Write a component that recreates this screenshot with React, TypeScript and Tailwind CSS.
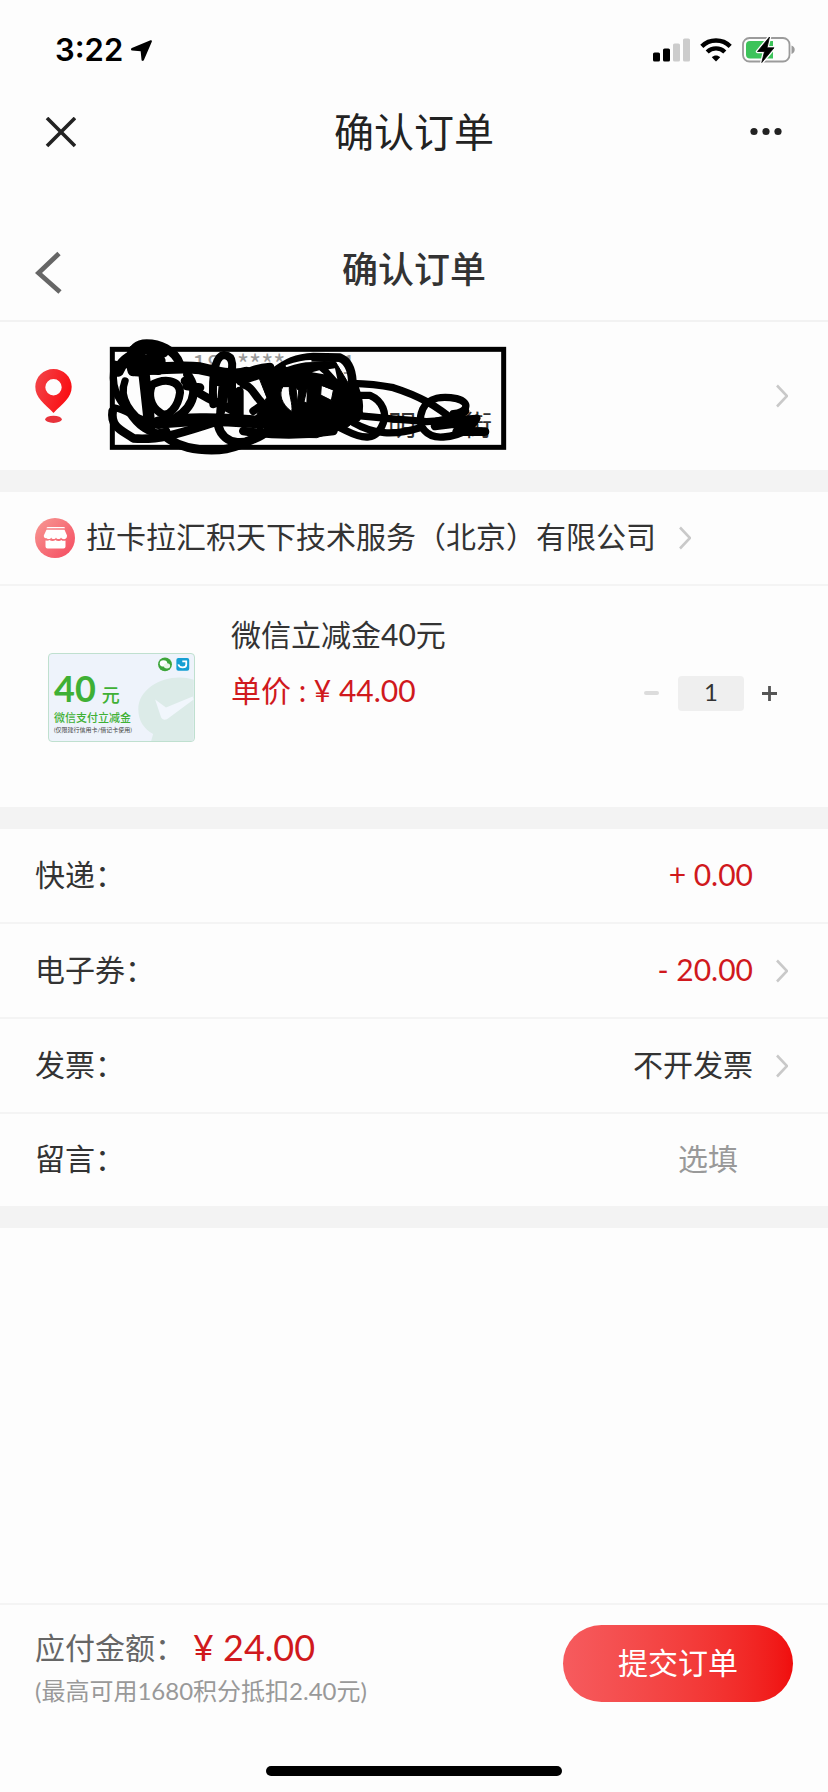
import React, { useState } from 'react';

const ChevronRight = () => (
  <svg className="w-3 h-6 shrink-0" viewBox="0 0 12 24" fill="none" stroke="#c9c9c9" strokeWidth="2.600" aria-hidden="true">
    <path d="M1 1.500L11 12L1 22.500" />
  </svg>
);

const StatusBar = () => (
  <div className="h-22 pt-3 pl-[55px] pr-8 flex items-center justify-between text-black">
    <div className="flex items-center gap-2">
      <span className="font-['Inter',sans-serif] font-semibold text-[31px] leading-9">3:22</span>
      <svg className="w-[21px] h-[21px]" viewBox="0 0 20 20" aria-hidden="true">
        <path d="M18.600 0.300L0.800 7.600C-0.400 8.200 -0.200 9.800 1 10L9.200 10.800L10 18.800C10.200 20.200 11.700 20.300 12.300 19L19.800 1.600C20.200 0.600 19.600 -0.100 18.600 0.300Z" />
      </svg>
    </div>
    <div className="flex items-center gap-2.5">
      <svg className="w-[37px] h-6" viewBox="0 0 37 24" aria-hidden="true">
        <rect x="0" y="14.5" width="7" height="9" rx="1.6" />
        <rect x="10" y="10.5" width="7" height="13" rx="1.6" />
        <rect x="20" y="5.5" width="7" height="18" rx="1.6" fill="#cccccc" />
        <rect x="30" y="0.5" width="7" height="23" rx="1.6" fill="#cccccc" />
      </svg>
      <svg className="w-8 h-6" viewBox="0 0 32 24" fill="none" stroke="#000" strokeWidth="4.4" aria-hidden="true">
        <path d="M1.8 8.4C9.6 0.6 22.4 0.6 30.2 8.4" />
        <path d="M7.2 14C12.2 9.2 19.8 9.2 24.8 14" />
        <path d="M11.8 19.2C14.2 16.8 17.8 16.8 20.2 19.2L16 23.6Z" fill="#000" stroke="none" />
      </svg>
      <svg className="w-[54px] h-7" viewBox="0 0 54 28" aria-hidden="true">
        <rect x="1" y="2" width="46.5" height="23.5" rx="6.5" fill="none" stroke="#9b9b9b" strokeWidth="1.8" />
        <path d="M8 5H31V22.500H8A4 4 0 0 1 4 18.500V9A4 4 0 0 1 8 5Z" fill="#3dc35a" />
        <path d="M49.500 9.600C53.800 10.800 53.800 16.800 49.500 18Z" fill="#9b9b9b" />
        <path d="M27.500 1L15.500 15.500H22.500L19.800 26.500L32 11.800H25Z" stroke="#fdfdfd" strokeWidth="3.400" strokeLinejoin="round" />
        <path d="M27.500 1L15.500 15.500H22.500L19.800 26.500L32 11.800H25Z" stroke="#000" strokeWidth="0.800" strokeLinejoin="round" />
      </svg>
    </div>
  </div>
);

const PinIcon = () => (
  <svg className="w-[37px] h-14 shrink-0" viewBox="0 0 37 56" aria-hidden="true">
    <defs>
      <linearGradient id="pin" x1="0" y1="0" x2="1" y2="0.4">
        <stop offset="0" stopColor="#f2474b" />
        <stop offset="1" stopColor="#fa0f14" />
      </linearGradient>
    </defs>
    <path
      d="M18.500 1C8.500 1 0.300 9 0.300 18.800C0.300 30 9.500 35.500 18.500 45C27.500 35.500 36.700 30 36.700 18.800C36.700 9 28.500 1 18.500 1ZM18.500 11A8.200 8.200 0 1 1 18.500 27.400A8.200 8.200 0 1 1 18.500 11Z"
      fill="url(#pin)"
      fillRule="evenodd"
    />
    <ellipse cx="18.500" cy="51.300" rx="8.300" ry="3.600" fill="#e8333b" />
  </svg>
);

const Scribble = () => (
  <svg
    className="absolute left-0 top-0 w-[420px] h-[130px]"
    viewBox="0 0 1260 390"
    fill="none"
    stroke="#000"
    strokeWidth="26"
    strokeLinecap="round"
    strokeLinejoin="round"
    aria-hidden="true"
  >
    <rect x="37" y="55" width="1174" height="294" strokeWidth="15" strokeLinecap="butt" strokeLinejoin="miter" />
    <path d="M90 85C95 55 110 38 140 38C175 38 225 55 240 100" />
    <path d="M55 120C65 90 90 75 120 65M100 60C85 110 95 135 150 110M130 50L190 62M120 85L180 90M110 110L175 115" strokeWidth="34" />
    <path d="M45 100C30 160 50 200 85 240C110 280 150 320 200 300" strokeWidth="22" />
    <path d="M75 150C55 200 90 250 150 290" strokeWidth="22" />
    <path d="M130 110L138 180L150 290" strokeWidth="34" />
    <path d="M100 118C180 112 240 105 300 112C340 120 400 140 440 125" strokeWidth="36" />
    <path d="M150 165C190 140 240 145 240 185C235 225 205 265 180 245C150 225 145 190 155 165" strokeWidth="24" />
    <path d="M262 130C300 180 280 240 200 275M255 150C300 200 350 210 400 240M260 165L300 170" />
    <path d="M38 240C30 290 70 300 100 322C180 330 260 300 340 275" />
    <path d="M45 230C90 240 110 270 170 275" strokeWidth="20" />
    <path d="M175 275C260 265 330 262 460 272L640 275" strokeWidth="38" />
    <path d="M190 310C240 360 350 370 420 342C470 320 500 310 510 290" />
    <path d="M340 220C335 130 345 75 372 72C405 75 400 110 385 160C365 200 370 230 355 265" strokeWidth="24" />
    <path d="M355 285C370 345 450 350 480 300M430 300C500 310 600 315 700 300" />
    <path d="M345 150C400 170 420 115 510 108M370 150L362 240M395 140L395 230M418 180L418 270M420 150L480 130" />
    <path d="M430 160C460 170 460 190 490 220L460 240" strokeWidth="24" />
    <path
      d="M470 120L600 95L705 90L765 190L790 250L740 290L650 320L530 318L460 270L500 200ZM548 168C535 190 545 220 575 242C580 220 565 190 568 168ZM664 164L662 192L694 208L700 178ZM588 170L592 215L596 180ZM622 170L612 212L620 216Z"
      fill="#000"
      stroke="#000"
      strokeWidth="3"
      fillRule="evenodd"
    />
    <path d="M520 125C560 95 590 80 640 78L720 80C745 90 755 115 757 150C770 190 785 220 770 260" />
    <path d="M560 105C590 95 610 90 632 90" stroke="#fdfdfd" strokeWidth="6" />
    <path d="M685 115L705 112L712 145ZM636 124L658 118L672 130Z" fill="#fdfdfd" stroke="none" />
    <path d="M755 157C800 158 840 162 880 170C960 195 1010 225 1070 275" strokeWidth="22" />
    <path d="M775 193L810 193C850 210 860 250 850 275C830 330 790 325 740 300L720 290" strokeWidth="22" />
    <path d="M745 250C840 262 900 265 980 272L1130 262" strokeWidth="22" />
    <path d="M760 275C820 310 880 315 960 290" strokeWidth="22" />
    <path d="M1060 248C1100 245 1115 215 1070 203C1030 195 985 198 968 235C945 290 985 322 1030 318C1090 315 1120 285 1130 262" strokeWidth="22" />
    <path d="M1010 272L1060 262L1095 240M1005 285L1060 278L1110 285M1070 302L1155 302" strokeWidth="26" />
  </svg>
);

const StoreIcon = () => (
  <svg className="w-10 h-10 shrink-0" viewBox="0 0 40 40" aria-hidden="true">
    <defs>
      <linearGradient id="store" x1="0" y1="0" x2="1" y2="1">
        <stop offset="0" stopColor="#f79a94" />
        <stop offset="1" stopColor="#f5495f" />
      </linearGradient>
    </defs>
    <circle cx="20" cy="20" r="20" fill="url(#store)" />
    <path d="M13 9H28.500Q30 9 30 10.200H11.500Q11.500 9 13 9Z" fill="#fff" />
    <path
      d="M11.500 11.800H29.500L32 17.500C32.200 20 30.500 21.200 29 21.200C27.500 21.200 26.500 20.600 26 19.600C25.400 21.600 21.600 21.600 21 19.600C20.400 21.600 16.800 21.600 16.200 19.600C15.600 21.400 12.600 21.600 11.800 20.200C10 20.800 8.600 19.400 8.800 17.500Z"
      fill="#fff"
    />
    <path d="M10.500 22.600C12.500 23 13.500 22.600 14.600 22C16 23.400 19 23.400 20.400 22C22 23.400 25 23.400 26.200 22C27.500 23 29 23 30.500 22.600V28.500Q30.500 30.500 28.500 30.500H12.500Q10.500 30.500 10.500 28.500Z" fill="#fff" />
  </svg>
);

const ProductThumb = () => (
  <div className="relative w-[147px] h-[89px] rounded border border-[#bfe0cf] bg-[#eef3fb] overflow-hidden">
    <svg className="absolute inset-0 w-full h-full" viewBox="0 0 146 88" aria-hidden="true">
      <path d="M146 26C122 18 90 32 90 56C90 68 96 76 105 81L103 88H146Z" fill="#dcebe8" />
      <path d="M107 46L118 54L145 43L146 46L119 66C116 67 114 66 113 64Z" fill="#f1f6fc" />
      <circle cx="117" cy="10.500" r="7" fill="#3da53a" />
      <ellipse cx="115.500" cy="9.500" rx="3.800" ry="3.200" fill="#fff" />
      <ellipse cx="119" cy="12" rx="3.200" ry="2.700" fill="#e9f6e8" />
      <rect x="128.500" y="4" width="13" height="13" rx="2" fill="#159fd3" />
      <path d="M130.500 10.500C131.500 14.500 138.500 14.500 138.500 10.500V7.500H134.500" fill="none" stroke="#fff" strokeWidth="1.800" />
    </svg>
    <div className="relative pl-[5px] pt-3.5 text-[#3fb035]">
      <div className="h-[42px] flex items-baseline gap-1.5 leading-10">
        <span className="text-4xl font-bold">40</span>
        <span className="text-lg font-medium">元</span>
      </div>
      <p className="text-[11px] leading-4 font-medium">微信支付立减金</p>
      <p className="text-[6px] leading-2 text-[#444] whitespace-nowrap">(仅限建行信用卡/借记卡使用)</p>
    </div>
  </div>
);

const App = () => {
  const [count, setCount] = useState(1);
  const [remark, setRemark] = useState('');

  return (
    <div className="min-h-screen flex flex-col bg-[#fdfdfd] text-[#333] text-[30px] leading-10 font-['Lato','Noto_Sans_CJK_SC',sans-serif]">
      <StatusBar />

      <nav className="h-[90px] px-11 grid grid-cols-3 items-center">
        <button type="button" aria-label="关闭" className="justify-self-start">
          <svg className="w-8 h-8" viewBox="0 0 32 32" fill="none" stroke="#222" strokeWidth="3.600" aria-hidden="true">
            <path d="M3 1L31 29M31 1L3 29" />
          </svg>
        </button>
        <p className="justify-self-center pb-0.5 text-[40px] leading-[56px] text-[#222] whitespace-nowrap">确认订单</p>
        <button type="button" aria-label="更多" className="justify-self-end">
          <svg className="w-9 h-8" viewBox="0 0 36 32" fill="#222" aria-hidden="true">
            <circle cx="6" cy="14.500" r="3.600" />
            <circle cx="18" cy="14.500" r="3.600" />
            <circle cx="30" cy="14.500" r="3.600" />
          </svg>
        </button>
      </nav>

      <header className="mt-[42px] h-[102px] px-[35px] grid grid-cols-3 items-center border-b-2 border-[#f2f2f2]">
        <button type="button" aria-label="返回" className="justify-self-start">
          <svg className="w-7 h-12" viewBox="0 0 28 48" fill="none" stroke="#666" strokeWidth="4.800" aria-hidden="true">
            <path d="M24 7.500L3.500 27L25 46" />
          </svg>
        </button>
        <h1 className="justify-self-center pb-0.5 text-4xl font-medium whitespace-nowrap">确认订单</h1>
      </header>

      <main>
        <section className="h-[148px] pl-[35px] pr-10 flex items-center">
          <PinIcon />
          <div className="relative ml-7 flex-1 h-[130px] px-2 pt-3 pb-4 flex flex-col justify-between">
            <p className="pl-21 flex gap-4 text-[26px] text-[#999] font-['Noto_Sans_CJK_SC',sans-serif]">
              <span>18</span>
              <span>****</span>
              <span className="pl-10">1</span>
            </p>
            <p className="pl-70 flex gap-12 text-[28px]">
              <span>明</span>
              <span>街</span>
            </p>
            <Scribble />
          </div>
          <ChevronRight />
        </section>

        <div className="h-[22px] bg-[#f3f3f3]" />

        <section>
          <a href="#store" className="h-[94px] px-[35px] flex items-center border-b-2 border-[#f4f4f4]">
            <StoreIcon />
            <span className="ml-[11px] mr-[23px] pb-1">拉卡拉汇积天下技术服务（北京）有限公司</span>
            <ChevronRight />
          </a>
          <div className="h-[221px] pl-12 pr-[51px] flex">
            <div className="pt-[67px]">
              <ProductThumb />
            </div>
            <div className="flex-1 pl-9 pt-[28px]">
              <h2>微信立减金40元</h2>
              <div className="mt-3 h-12 flex items-center justify-between">
                <p className="text-[#d0191d]">单价 : ¥ 44.00</p>
                <div className="mt-1.5 flex items-center gap-[18px]">
                  <button type="button" aria-label="减少" className="w-4 h-8 flex items-center" onClick={() => setCount(Math.max(1, count - 1))}>
                    <span className="w-[15px] h-1 rounded-sm bg-[#dcdcdc]" />
                  </button>
                  <input
                    aria-label="数量"
                    className="w-[66px] h-[35px] pb-1 rounded bg-[#efefef] text-center text-2xl"
                    value={count}
                    onChange={(e) => setCount(Number(e.target.value) || 1)}
                  />
                  <button type="button" aria-label="增加" onClick={() => setCount(count + 1)}>
                    <svg className="w-[15px] h-[15px]" viewBox="0 0 15 15" stroke="#555" strokeWidth="2.800" aria-hidden="true">
                      <path d="M0 7.500H15M7.500 0V15" />
                    </svg>
                  </button>
                </div>
              </div>
            </div>
          </div>
        </section>

        <div className="h-[22px] bg-[#f3f3f3]" />

        <section className="divide-y-2 divide-[#f4f4f4]">
          <div className="h-[95px] pl-[35px] pr-[75px] pb-1 flex items-center justify-between">
            <span>快递：</span>
            <span className="text-[#d0191d]">+ 0.00</span>
          </div>
          <button type="button" className="w-full h-[95px] pl-[35px] pr-10 flex items-center justify-between">
            <span className="pb-1">电子券：</span>
            <span className="flex items-center gap-[23px]">
              <span className="pb-1 text-[#d0191d]">- 20.00</span>
              <ChevronRight />
            </span>
          </button>
          <button type="button" className="w-full h-[95px] pl-[35px] pr-10 flex items-center justify-between">
            <span className="pb-1">发票：</span>
            <span className="flex items-center gap-[23px]">
              <span className="pb-1">不开发票</span>
              <ChevronRight />
            </span>
          </button>
          <div className="h-[92px] pl-[35px] pr-[90px] pb-1 flex items-center justify-between">
            <label htmlFor="remark">留言：</label>
            <input
              id="remark"
              className="flex-1 min-w-0 text-right placeholder:text-[#999]"
              placeholder="选填"
              value={remark}
              onChange={(e) => setRemark(e.target.value)}
            />
          </div>
        </section>

        <div className="h-[22px] bg-[#f3f3f3]" />
      </main>

      <footer className="mt-auto border-t-2 border-[#f4f4f4]">
        <div className="px-[35px] pt-5 flex items-start justify-between">
          <div>
            <p className="flex items-center">
              <span className="text-[#666]">应付金额：</span>
              <span className="ml-2 text-4xl leading-[44px] text-[#d0191d]">¥ 24.00</span>
            </p>
            <p className="text-2xl leading-[44px] text-[#999]">(最高可用1680积分抵扣2.40元)</p>
          </div>
          <button type="button" className="w-[230px] h-[77px] pb-1 rounded-full bg-linear-to-r from-[#f65b5e] to-[#f00d0d] text-white">
            提交订单
          </button>
        </div>
        <div className="mx-auto mt-[53px] mb-4 w-[296px] h-2.5 rounded-full bg-black" />
      </footer>
    </div>
  );
};

export default App;
